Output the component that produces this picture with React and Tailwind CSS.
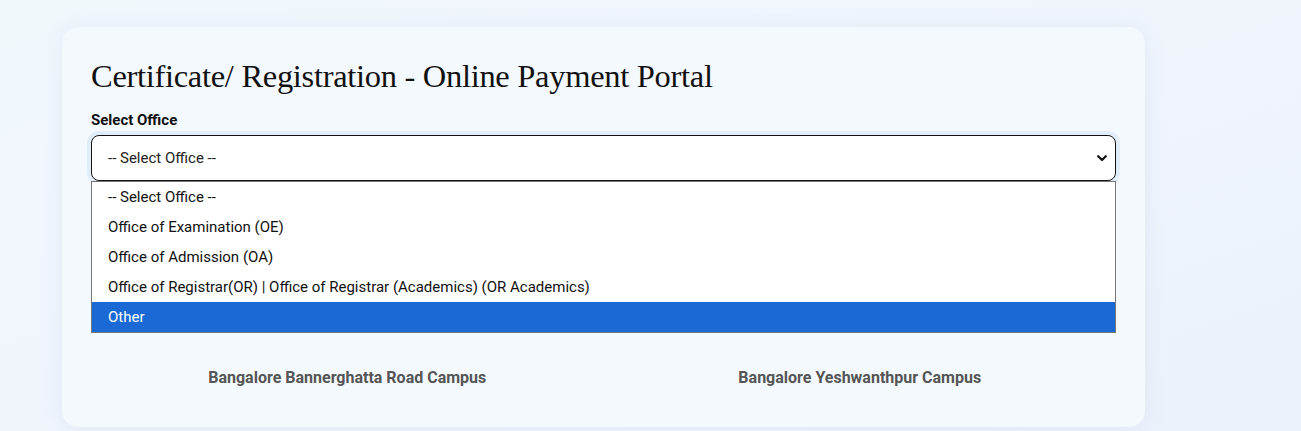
import React, { useState } from 'react';

const offices = [
    '-- Select Office --',
    'Office of Examination (OE)',
    'Office of Admission (OA)',
    'Office of Registrar(OR) | Office of Registrar (Academics) (OR Academics)',
    'Other',
];

const campuses = ['Bangalore Bannerghatta Road Campus', 'Bangalore Yeshwanthpur Campus'];

const Chevron = () => (
    <svg width="10" height="7" viewBox="0 0 10 7" fill="none">
        <polyline points="1.2,1.2 5,5 8.8,1.2" stroke="#111" strokeWidth="2.2" strokeLinecap="round" strokeLinejoin="round" />
    </svg>
);

const App = () => {
    const [hovered, setHovered] = useState(4);

    return (
        <div
            className="min-h-[431px] w-full bg-gradient-to-br from-[#f1f8fc] via-[#f0f5fc] to-[#ebf1fb] pt-[27px] pb-[4px] pl-[62px] pr-[156px]"
            style={{ fontFamily: 'Roboto, "Liberation Sans", sans-serif' }}
        >
            <div className="rounded-2xl bg-[#f4f9fe] shadow-[0_0_18px_rgba(180,195,225,0.25)] px-[29px] pt-[26px] pb-[40px]">
                {/* Page heading */}
                <h1
                    className="text-[32.5px] leading-[46px] tracking-[-0.3px] text-[#111]"
                    style={{ fontFamily: '"Liberation Serif", "DejaVu Serif", serif' }}
                >
                    Certificate/ Registration - Online Payment Portal
                </h1>

                <label className="block mt-[12px] text-[15px] leading-[18px] font-bold text-[#111]">Select Office</label>

                {/* Office picker, opened */}
                <div className="relative mt-[6px]">
                    <div className="rounded-lg ring-4 ring-[#e2edfa]">
                        <div className="flex h-[46px] items-center justify-between rounded-lg border border-[#111] bg-white pl-[16px] pr-[8px] text-[15px] text-[#222]">
                            <span>-- Select Office --</span>
                            <Chevron />
                        </div>
                    </div>

                    <ul className="absolute left-0 right-0 top-[46px] z-10 border border-[#777] bg-white text-[15px]">
                        {offices.map((name, i) => (
                            <li
                                key={name}
                                onMouseEnter={() => setHovered(i)}
                                className={`flex h-[30px] items-center pl-[16px] ${i === hovered ? 'bg-[#1a69d4] text-white' : 'text-[#111]'}`}
                            >
                                {name}
                            </li>
                        ))}
                    </ul>
                </div>

                {/* Campus list under the picker */}
                <div className="mt-[187px] grid grid-cols-2 text-center text-[16px] leading-[19px] font-bold text-[#555]">
                    {campuses.map((c) => (
                        <div key={c}>{c}</div>
                    ))}
                </div>
            </div>
        </div>
    );
};

export default App;
